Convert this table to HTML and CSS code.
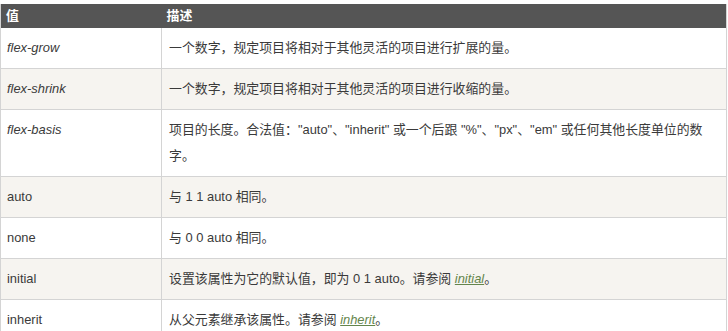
FILE: index.html
```html
<!DOCTYPE html>
<html lang="zh-CN">
<head>
<meta charset="utf-8">
<title>flex 属性值</title>
<link rel="stylesheet" href="styles.css">
</head>
<body>
<table class="ref">
  <colgroup><col class="c-val"><col class="c-desc"></colgroup>
  <thead>
    <tr><th>值</th><th>描述</th></tr>
  </thead>
  <tbody>
    <tr><td><i>flex-grow</i></td><td>一个数字，规定项目将相对于其他灵活的项目进行扩展的量。</td></tr>
    <tr class="alt"><td><i>flex-shrink</i></td><td>一个数字，规定项目将相对于其他灵活的项目进行收缩的量。</td></tr>
    <tr><td><i>flex-basis</i></td><td>项目的长度。合法值："auto"、"inherit" 或一个后跟 "%"、"px"、"em" 或任何其他长度单位的数字。</td></tr>
    <tr class="alt"><td>auto</td><td>与 1 1 auto 相同。</td></tr>
    <tr><td>none</td><td>与 0 0 auto 相同。</td></tr>
    <tr class="alt"><td>initial</td><td>设置该属性为它的默认值，即为 0 1 auto。请参阅 <a href="#" class="lnk">initial</a>。</td></tr>
    <tr><td>inherit</td><td>从父元素继承该属性。请参阅 <a href="#" class="lnk">inherit</a>。</td></tr>
  </tbody>
</table>
</body>
</html>
```
FILE: styles.css
```css
html, body {
  margin: 0;
  padding: 0;
  background: #ffffff;
}
body {
  padding-top: 4px;
  font-family: "Liberation Sans", Arial, "Noto Sans CJK SC", sans-serif;
  font-size: 12.9px;
  color: #3a3a3a;
}
.ref {
  width: 727px;
  border-collapse: collapse;
  table-layout: fixed;
  border-left: 1px solid #d4d4d4;
  border-right: 1px solid #d4d4d4;
}
.c-val { width: 161px; }
.ref th {
  background: #555555;
  color: #ffffff;
  font-weight: bold;
  text-align: left;
  height: 24px;
  padding: 0 5px;
  line-height: 24px;
  box-sizing: border-box;
}
.ref td {
  padding: 7px 7px 7px 6px;
  line-height: 26px;
  vertical-align: top;
  border-bottom: 1px solid #d4d4d4;
  border-left: 1px solid #d4d4d4;
}
.ref td:first-child { border-left: none; }
.ref td + td { padding-left: 7px; }
.ref tr.alt td { background: #f6f4f0; }
.ref i { font-style: italic; }
.lnk {
  color: #64854c;
  font-style: italic;
  text-decoration: underline;
}
```
